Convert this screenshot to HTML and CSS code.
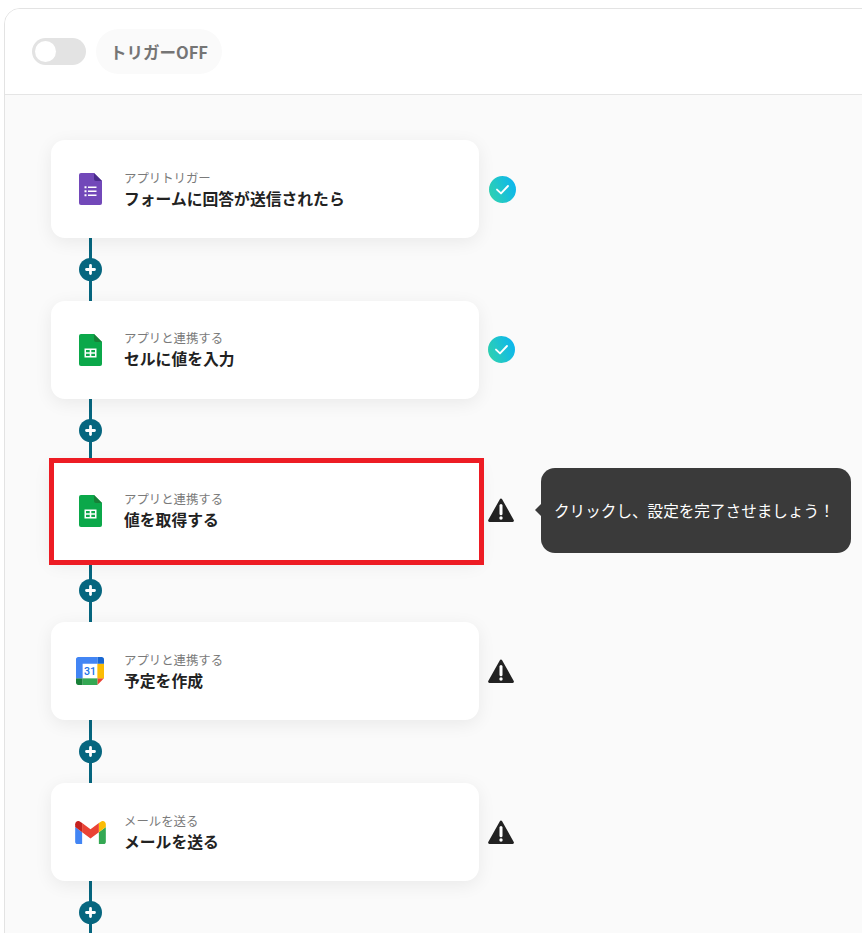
FILE: index.html
```html
<!DOCTYPE html>
<html lang="ja">
<head>
<meta charset="utf-8">
<title>フローボット</title>
<link rel="stylesheet" href="styles.css">
</head>
<body>
<svg class="defs" width="0" height="0" aria-hidden="true">
  <defs>
    <linearGradient id="okgrad" x1="0" y1="0.7" x2="1" y2="0.3">
      <stop offset="0" stop-color="#2fd2b0"/>
      <stop offset="1" stop-color="#0cb5ef"/>
    </linearGradient>
    <symbol id="check" viewBox="0 0 27 27">
      <circle cx="13.5" cy="13.5" r="13.5" fill="url(#okgrad)"/>
      <path d="M8 13.6l4 3.8 7-7.4" fill="none" stroke="#fff" stroke-width="1.9" stroke-linecap="round" stroke-linejoin="round"/>
    </symbol>
    <symbol id="warn" viewBox="0 0 26 25">
      <path d="M13 1.8L24.6 22.6H1.4z" fill="#222" stroke="#222" stroke-width="2.6" stroke-linejoin="round"/>
      <path d="M13 7.5v8.2" stroke="#fff" stroke-width="3" stroke-linecap="round"/>
      <circle cx="13" cy="20" r="1.7" fill="#fff"/>
    </symbol>
    <symbol id="plus" viewBox="0 0 23 23">
      <circle cx="11.5" cy="11.5" r="11.5" fill="#06667f"/>
      <path d="M11.5 7.5v8M7.5 11.5h8" stroke="#fff" stroke-width="2.8" stroke-linecap="round"/>
    </symbol>
    <symbol id="sheets" viewBox="0 0 23 32">
      <path d="M2 0H15L23 8V30a2 2 0 0 1-2 2H2a2 2 0 0 1-2-2V2a2 2 0 0 1 2-2z" fill="#0ba84a"/>
      <path d="M15 0L23 8H17a2 2 0 0 1-2-2z" fill="#188038"/>
      <path d="M5.5 14.5h12v9h-12zM7 16v2.2h3.7V16zm5.3 0v2.2H16V16zM7 19.8V22h3.7v-2.2zm5.3 0V22H16v-2.2z" fill="#fff" fill-rule="evenodd"/>
    </symbol>
  </defs>
</svg>

<main class="frame">
  <header class="topbar">
    <span class="toggle"><span class="knob"></span></span>
    <span class="trigger-pill">トリガーOFF</span>
  </header>

  <section class="canvas">
    <div class="step">
      <div class="card">
        <span class="app-icon">
          <svg class="icon-doc" viewBox="0 0 23 32">
            <path d="M2 0H15L23 8V30a2 2 0 0 1-2 2H2a2 2 0 0 1-2-2V2a2 2 0 0 1 2-2z" fill="#7248b9"/>
            <path d="M15 0L23 8H17a2 2 0 0 1-2-2z" fill="#4a2c8c"/>
            <path d="M5.5 13.2h2v2h-2zM5.5 17.2h2v2h-2zM5.5 21.2h2v2h-2zM9 13.4h8.5v1.6H9zM9 17.4h8.5v1.6H9zM9 21.4h8.5v1.6H9z" fill="#fff"/>
          </svg>
        </span>
        <div class="card-text">
          <div class="card-label">アプリトリガー</div>
          <div class="card-title">フォームに回答が送信されたら</div>
        </div>
      </div>
      <svg class="status status-first"><use href="#check"/></svg>
    </div>
    <div class="connector"><svg class="plus"><use href="#plus"/></svg></div>

    <div class="step">
      <div class="card">
        <span class="app-icon"><svg class="icon-doc"><use href="#sheets"/></svg></span>
        <div class="card-text">
          <div class="card-label">アプリと連携する</div>
          <div class="card-title">セルに値を入力</div>
        </div>
      </div>
      <svg class="status"><use href="#check"/></svg>
    </div>
    <div class="connector"><svg class="plus"><use href="#plus"/></svg></div>

    <div class="step">
      <div class="card card-flagged">
        <span class="flag-frame"></span>
        <span class="app-icon"><svg class="icon-doc"><use href="#sheets"/></svg></span>
        <div class="card-text">
          <div class="card-label">アプリと連携する</div>
          <div class="card-title">値を取得する</div>
        </div>
      </div>
      <svg class="status status-warn"><use href="#warn"/></svg>
      <div class="tooltip">クリックし、設定を完了させましょう！</div>
    </div>
    <div class="connector"><svg class="plus"><use href="#plus"/></svg></div>

    <div class="step">
      <div class="card">
        <span class="app-icon">
          <svg class="icon-cal" viewBox="0 0 200 200">
            <path fill="#fff" d="M152.6 47.4H47.4v105.2h105.2z"/>
            <path fill="#ea4335" d="M152.6 200L200 152.6h-47.4z"/>
            <path fill="#fbbc04" d="M200 47.4h-47.4v105.2H200z"/>
            <path fill="#34a853" d="M152.6 152.6H47.4V200h105.2z"/>
            <path fill="#188038" d="M0 152.6v31.6C0 192.9 7.1 200 15.8 200h31.6v-47.4z"/>
            <path fill="#1967d2" d="M200 47.4V15.8C200 7.1 192.9 0 184.2 0h-31.6v47.4z"/>
            <path fill="#4285f4" d="M152.6 0H15.8C7.1 0 0 7.1 0 15.8v136.8h47.4V47.4h105.2z"/>
            <text class="cal-date" x="100" y="128" text-anchor="middle">31</text>
          </svg>
        </span>
        <div class="card-text">
          <div class="card-label">アプリと連携する</div>
          <div class="card-title">予定を作成</div>
        </div>
      </div>
      <svg class="status status-warn"><use href="#warn"/></svg>
    </div>
    <div class="connector"><svg class="plus"><use href="#plus"/></svg></div>

    <div class="step">
      <div class="card">
        <span class="app-icon">
          <svg class="icon-gmail" viewBox="52 42 88 66">
            <path fill="#4285f4" d="M58 108h14V74L52 59v43c0 3.32 2.69 6 6 6"/>
            <path fill="#34a853" d="M120 108h14c3.32 0 6-2.69 6-6V59l-20 15"/>
            <path fill="#fbbc04" d="M120 48v26l20-15v-8c0-7.42-8.47-11.65-14.4-7.2"/>
            <path fill="#ea4335" d="M72 74V48l24 18 24-18v26L96 92"/>
            <path fill="#c5221f" d="M52 51v8l20 15V48l-5.6-4.2c-5.94-4.45-14.4-.22-14.4 7.2"/>
          </svg>
        </span>
        <div class="card-text">
          <div class="card-label">メールを送る</div>
          <div class="card-title">メールを送る</div>
        </div>
      </div>
      <svg class="status status-warn"><use href="#warn"/></svg>
    </div>
    <div class="connector"><svg class="plus"><use href="#plus"/></svg></div>
  </section>
</main>
</body>
</html>
```

FILE: styles.css
```css
* { box-sizing: border-box; }

html, body {
  margin: 0;
  height: 100%;
  overflow: hidden;
  background: #fff;
}

body {
  padding: 8px 0 0 4px;
  font-family: "Noto Sans CJK JP", "Noto Sans", sans-serif;
  color: #222;
}

.defs { position: absolute; }

.frame {
  width: 900px;
  min-height: 1000px;
  border: 1px solid #e3e3e3;
  border-radius: 16px 0 0 0;
  overflow: hidden;
  background: #fafafa;
}

.topbar {
  display: flex;
  align-items: center;
  gap: 10px;
  height: 86px;
  padding: 0 0 0 27px;
  background: #fff;
  border-bottom: 1px solid #e5e5e5;
}

.toggle {
  display: flex;
  align-items: center;
  width: 54px;
  height: 27px;
  padding-left: 3px;
  border-radius: 14px;
  background: #e3e3e3;
}

.knob {
  width: 21px;
  height: 21px;
  border-radius: 50%;
  background: #fff;
}

.trigger-pill {
  display: flex;
  align-items: center;
  height: 45px;
  padding: 0 14px;
  border-radius: 23px;
  background: #fafafa;
  color: #757575;
  font-size: 16.5px;
  font-weight: 700;
}

.canvas {
  padding: 45px 0 0 46px;
}

.step {
  position: relative;
  display: flex;
  align-items: center;
  height: 98px;
}

.card {
  position: relative;
  display: flex;
  align-items: center;
  width: 428px;
  height: 98px;
  border-radius: 14px;
  background: #fff;
  box-shadow: 0 4px 18px rgba(0, 0, 0, 0.07);
}

.card-flagged { border-radius: 0; }

.flag-frame {
  position: absolute;
  top: -4px;
  right: -5px;
  bottom: -5px;
  left: -2px;
  border: 5px solid #ed1c24;
}

.app-icon {
  display: flex;
  align-items: center;
  justify-content: center;
  flex: none;
  width: 32px;
  margin: 0 17px 0 23px;
}

.icon-doc { flex: none; width: 23px; height: 32px; }
.icon-cal { flex: none; width: 28px; height: 28px; }
.icon-gmail { flex: none; width: 31px; height: 23px; }

.cal-date {
  font-family: "Roboto", "Liberation Sans", sans-serif;
  font-size: 76px;
  font-weight: 500;
  fill: #1a73e8;
}

.card-text { margin-left: 1px; }

.card-label {
  color: #7a7a7a;
  font-size: 12.4px;
  line-height: 18px;
}

.card-title {
  color: #222;
  font-size: 15.8px;
  font-weight: 700;
  line-height: 23px;
}

.status {
  flex: none;
  width: 27px;
  height: 27px;
  margin-left: 9px;
}

.status-first { margin-left: 10px; }

.status-warn {
  width: 26px;
  height: 25px;
}

.connector {
  display: flex;
  align-items: center;
  justify-content: center;
  width: 3px;
  height: 62.75px;
  margin-left: 38px;
  background: #06667f;
}

.plus {
  flex: none;
  width: 23px;
  height: 23px;
}

.tooltip {
  position: absolute;
  top: 6px;
  left: 490px;
  display: flex;
  align-items: center;
  width: 310px;
  height: 85px;
  padding-left: 13px;
  border-radius: 14px;
  background: #3a3a3a;
  color: #fff;
  font-size: 15.6px;
  white-space: nowrap;
}

.tooltip::before {
  content: "";
  position: absolute;
  top: 36px;
  left: -6px;
  border-style: solid;
  border-width: 6px 6px 6px 0;
  border-color: transparent #3a3a3a transparent transparent;
}
```
